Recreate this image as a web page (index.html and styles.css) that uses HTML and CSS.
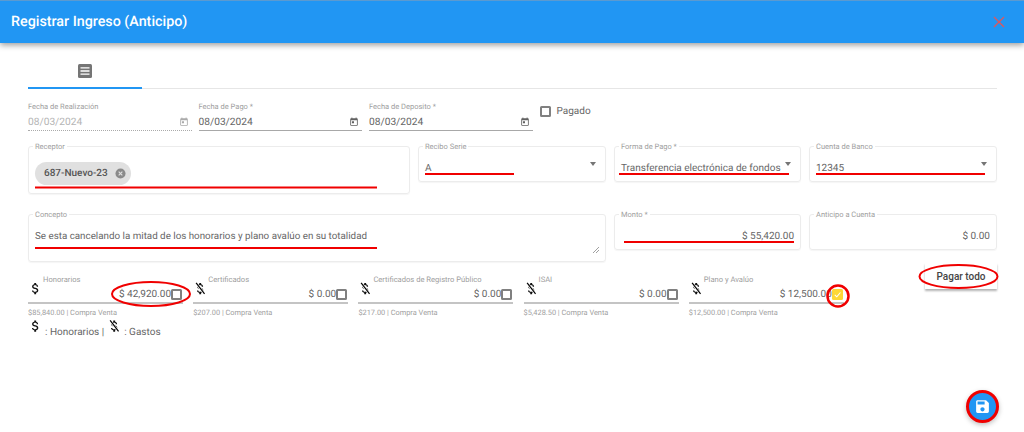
FILE: index.html
```html
<!DOCTYPE html>
<html lang="es">
<head>
    <meta charset="UTF-8">
    <title>Registrar Ingreso (Anticipo)</title>
    <link rel="stylesheet" href="styles.css">
</head>
<body>
    <svg class="defs" width="0" height="0">
        <symbol id="usd" viewBox="0 0 24 24">
            <path d="M11.8,10.9C9.53,10.31 8.8,9.7 8.8,8.75C8.8,7.66 9.81,6.9 11.5,6.9C13.28,6.9 13.94,7.75 14,9H16.21C16.14,7.28 15.09,5.7 13,5.19V3H10V5.16C8.06,5.58 6.5,6.84 6.5,8.77C6.5,11.08 8.41,12.23 11.2,12.9C13.7,13.5 14.2,14.38 14.2,15.31C14.2,16 13.71,17.1 11.5,17.1C9.44,17.1 8.63,16.18 8.5,15H6.32C6.44,17.19 8.08,18.42 10,18.83V21H13V18.85C14.95,18.5 16.5,17.35 16.5,15.3C16.5,12.46 14.07,11.5 11.8,10.9Z"/>
        </symbol>
        <symbol id="usd-off" viewBox="0 0 24 24">
            <path d="M11.8,10.9C9.53,10.31 8.8,9.7 8.8,8.75C8.8,7.66 9.81,6.9 11.5,6.9C13.28,6.9 13.94,7.75 14,9H16.21C16.14,7.28 15.09,5.7 13,5.19V3H10V5.16C8.06,5.58 6.5,6.84 6.5,8.77C6.5,11.08 8.41,12.23 11.2,12.9C13.7,13.5 14.2,14.38 14.2,15.31C14.2,16 13.71,17.1 11.5,17.1C9.44,17.1 8.63,16.18 8.5,15H6.32C6.44,17.19 8.08,18.42 10,18.83V21H13V18.85C14.95,18.5 16.5,17.35 16.5,15.3C16.5,12.46 14.07,11.5 11.8,10.9Z"/>
            <path d="M5.5 4.5L18 20" stroke="#fff" stroke-width="4"/>
            <path d="M5 3L18.5 20.5" stroke="#000" stroke-width="1.9"/>
        </symbol>
        <symbol id="today" viewBox="0 0 24 24">
            <path d="M19 3h-1V1h-2v2H8V1H6v2H5c-1.11 0-1.99.9-1.99 2L3 19c0 1.1.89 2 2 2h14c1.1 0 2-.9 2-2V5c0-1.1-.9-2-2-2zm0 16H5V8h14v11zM7 10h5v5H7z"/>
        </symbol>
    </svg>

    <header class="topbar">
        <h1>Registrar Ingreso (Anticipo)</h1>
        <svg class="close-icon" viewBox="0 0 12 12"><path d="M1 1L11 11M11 1L1 11"/></svg>
    </header>

    <main class="content">
        <div class="tabs">
            <div class="tab active">
                <svg class="tab-icon" viewBox="0 0 14 14">
                    <rect width="14" height="14" rx="1.5" fill="#757575"/>
                    <path d="M2.5 3.8H11.5M2.5 7H11.5M2.5 10.2H11.5" stroke="#fff" stroke-width="1.3"/>
                </svg>
            </div>
        </div>

        <div class="dates-row">
            <div class="date-field disabled">
                <label>Fecha de Realización</label>
                <div class="date-input"><span>08/03/2024</span><svg class="cal"><use href="#today"/></svg></div>
            </div>
            <div class="date-field">
                <label>Fecha de Pago *</label>
                <div class="date-input"><span>08/03/2024</span><svg class="cal"><use href="#today"/></svg></div>
            </div>
            <div class="date-field">
                <label>Fecha de Deposito *</label>
                <div class="date-input"><span>08/03/2024</span><svg class="cal"><use href="#today"/></svg></div>
            </div>
            <div class="paid-check"><span class="box"></span><span>Pagado</span></div>
        </div>

        <div class="form-grid row-select">
            <div class="outlined tall">
                <span class="legend">Receptor</span>
                <span class="chip">687-Nuevo-23
                    <svg class="chip-x" viewBox="0 0 12 12"><circle cx="6" cy="6" r="5.5" fill="#8a8a8a"/><path d="M4 4L8 8M8 4L4 8" stroke="#e0e0e0" stroke-width="1.2"/></svg>
                </span>
            </div>
            <div class="outlined select"><span class="legend">Recibo Serie</span><span class="value">A</span><i class="caret"></i></div>
            <div class="outlined select"><span class="legend">Forma de Pago *</span><span class="value">Transferencia electrónica de fondos</span><i class="caret"></i></div>
            <div class="outlined select"><span class="legend">Cuenta de Banco</span><span class="value">12345</span><i class="caret"></i></div>
        </div>

        <div class="form-grid row-concept">
            <div class="outlined tall span-2">
                <span class="legend">Concepto</span>
                <span class="value concept-text">Se esta cancelando la mitad de los honorarios y plano avalúo en su totalidad</span>
                <svg class="resize" viewBox="0 0 6 6"><path d="M0 6L6 0M3 6L6 3" stroke="#888" stroke-width=".8"/></svg>
            </div>
            <div class="outlined amount"><span class="legend">Monto *</span><span class="value">$ 55,420.00</span></div>
            <div class="outlined amount"><span class="legend">Anticipo a Cuenta</span><span class="value">$ 0.00</span></div>
        </div>

        <div class="concepts-row">
            <div class="pay-field">
                <div class="pay-input">
                    <svg class="money"><use href="#usd"/></svg>
                    <label>Honorarios</label>
                    <span class="pay-value">$ 42,920.00</span><span class="box"></span>
                </div>
                <small>$85,840.00 | Compra Venta</small>
            </div>
            <div class="pay-field">
                <div class="pay-input">
                    <svg class="money"><use href="#usd-off"/></svg>
                    <label>Certificados</label>
                    <span class="pay-value">$ 0.00</span><span class="box"></span>
                </div>
                <small>$207.00 | Compra Venta</small>
            </div>
            <div class="pay-field">
                <div class="pay-input">
                    <svg class="money"><use href="#usd-off"/></svg>
                    <label>Certificados de Registro Público</label>
                    <span class="pay-value">$ 0.00</span><span class="box"></span>
                </div>
                <small>$217.00 | Compra Venta</small>
            </div>
            <div class="pay-field">
                <div class="pay-input">
                    <svg class="money"><use href="#usd-off"/></svg>
                    <label>ISAI</label>
                    <span class="pay-value">$ 0.00</span><span class="box"></span>
                </div>
                <small>$5,428.50 | Compra Venta</small>
            </div>
            <div class="pay-field">
                <div class="pay-input">
                    <svg class="money"><use href="#usd-off"/></svg>
                    <label>Plano y Avalúo</label>
                    <span class="pay-value">$ 12,500.00</span>
                    <span class="box checked"><svg viewBox="0 0 12 12"><path d="M3 6.5L5.2 8.5L9.2 3.8" fill="none" stroke="#fff" stroke-width="1.1"/></svg></span>
                </div>
                <small>$12,500.00 | Compra Venta</small>
            </div>
            <button class="pay-all">Pagar todo</button>
        </div>

        <div class="legend-row">
            <svg class="money"><use href="#usd"/></svg><span>: Honorarios |</span>
            <svg class="money off"><use href="#usd-off"/></svg><span>: Gastos</span>
        </div>
    </main>

    <button class="fab">
        <svg viewBox="0 0 24 24"><path d="M17 3H5c-1.11 0-2 .9-2 2v14c0 1.1.89 2 2 2h14c1.1 0 2-.9 2-2V7l-4-4zm-5 16c-1.66 0-3-1.34-3-3s1.34-3 3-3 3 1.34 3 3-1.34 3-3 3zm3-10H5V5h10v4z"/></svg>
    </button>

    <!-- marcas rojas hechas sobre la captura -->
    <svg class="marks" viewBox="0 0 1024 432">
        <path d="M35 187.5H377M425 174H514M619 174H789M816 174H985M35 248H377M624 242H794"/>
        <ellipse cx="151" cy="294" rx="39" ry="12"/>
        <ellipse cx="958.5" cy="276.5" rx="39" ry="11.5"/>
        <circle cx="838" cy="296" r="10.5"/>
    </svg>
</body>
</html>
```

FILE: styles.css
```css
* {
    box-sizing: border-box;
}
html, body {
    height: 432px;
}
body {
    margin: 0;
    overflow: hidden;
    position: relative;
    background: #fff;
    color: #666;
    font-family: Roboto, "Liberation Sans", sans-serif;
    font-size: 10px;
    text-rendering: geometricPrecision;
}
.defs {
    position: absolute;
}
.topbar {
    height: 43px;
    padding: 0 19px 0 11px;
    display: flex;
    align-items: center;
    justify-content: space-between;
    background: #2196f3;
    border-top: 1px solid #5b9ad0;
    box-shadow: 0 2px 6px rgba(0, 0, 0, 0.4);
}
.topbar h1 {
    margin: 0;
    font-size: 14.3px;
    font-weight: 500;
    color: #fff;
}
.close-icon {
    width: 12px;
    height: 12px;
    fill: none;
    stroke: #e0565b;
    stroke-width: 1.3;
}
.content {
    padding: 0 27px 0 28px;
}
.tabs {
    height: 46px;
    border-bottom: 1px solid #e6e6e6;
}
.tab {
    width: 114px;
    height: 46px;
    padding-top: 21px;
    display: flex;
    justify-content: center;
    border-bottom: 2px solid #2196f3;
}
.tab-icon {
    width: 14px;
    height: 14px;
}
.dates-row {
    margin-top: 11px;
    display: flex;
    gap: 7px;
}
.date-field {
    width: 163.5px;
}
.date-field label {
    display: block;
    height: 13px;
    font-size: 7.5px;
    line-height: 13px;
    color: #9e9e9e;
}
.date-input {
    height: 18px;
    display: flex;
    align-items: center;
    justify-content: space-between;
    border-bottom: 1px solid #a8a8a8;
    padding: 1px 3px 0 0;
    font-size: 10.2px;
}
.disabled .date-input {
    color: #b5b5b5;
    border-bottom: 1px dotted #aaa;
}
.cal {
    width: 10px;
    height: 10px;
    fill: #616161;
}
.disabled .cal {
    fill: #aaa;
}
.box {
    display: inline-block;
    width: 11px;
    height: 11px;
    flex: none;
    border: 2px solid #808080;
    border-radius: 1.5px;
}
.box.checked {
    border: none;
    background: #fdd835;
}
.box.checked svg {
    display: block;
}
.paid-check {
    padding-top: 6px;
    display: flex;
    align-items: flex-start;
    gap: 6px;
    line-height: 11px;
}
.form-grid {
    display: grid;
    grid-template-columns: 382px 188px 187px 188px;
    gap: 8px;
    align-items: start;
}
.row-select {
    margin-top: 15px;
}
.row-concept {
    margin-top: 20px;
}
.span-2 {
    grid-column: span 2;
}
.outlined {
    position: relative;
    height: 36px;
    padding: 15px 6px 0;
    border: 1px solid #ececec;
    border-radius: 3px;
    line-height: 14px;
    box-shadow: 0 1px 1px rgba(0, 0, 0, 0.04);
}
.outlined.tall {
    height: 48px;
}
.legend {
    position: absolute;
    top: -5px;
    left: 4px;
    padding: 0 2px;
    background: #fff;
    font-size: 7.5px;
    line-height: 10px;
    color: #9e9e9e;
}
.value {
    display: block;
    white-space: nowrap;
}
.concept-text {
    font-size: 9.8px;
}
.select .caret {
    position: absolute;
    top: 15px;
    right: 9px;
    border: 3px solid transparent;
    border-top: 4px solid #757575;
    border-bottom: none;
}
.amount {
    text-align: right;
}
.resize {
    position: absolute;
    right: 6px;
    bottom: 8px;
    width: 6px;
    height: 6px;
}
.chip {
    height: 23px;
    width: 96px;
    padding-left: 9px;
    display: inline-flex;
    align-items: center;
    gap: 7px;
    background: #e0e0e0;
    border-radius: 12px;
    font-weight: 500;
    white-space: nowrap;
    color: #555;
}
.chip-x {
    width: 11px;
    height: 11px;
    flex: none;
}
.concepts-row {
    margin-top: 11px;
    display: flex;
    gap: 10.2px;
    align-items: flex-start;
    position: relative;
}
.pay-field {
    width: 155px;
}
.pay-input {
    height: 31px;
    display: flex;
    align-items: flex-end;
    justify-content: flex-end;
    position: relative;
    border-bottom: 2px solid #c4c4c4;
    padding: 0 1px 2px 0;
    line-height: 15px;
}
.pay-value {
    margin-bottom: -2px;
}
.pay-input label {
    position: absolute;
    top: 1px;
    left: 15px;
    font-size: 7.6px;
    line-height: 12px;
    color: #9e9e9e;
    white-space: nowrap;
}
.money {
    position: absolute;
    top: 8px;
    left: 0;
    width: 15px;
    height: 15px;
    fill: #111;
}
small {
    display: block;
    margin-top: 3px;
    font-size: 7.4px;
    line-height: 11px;
    color: #a0a0a0;
}
.pay-all {
    margin-left: auto;
    margin-top: -10px;
    width: 72px;
    height: 26px;
    padding: 0;
    border: none;
    background: #fff;
    box-shadow: 0 2px 2px rgba(0, 0, 0, 0.3);
    font-family: inherit;
    font-size: 10px;
    font-weight: 500;
    color: #444;
}
.legend-row {
    margin-top: 2px;
    display: flex;
    align-items: flex-end;
    height: 19px;
}
.legend-row .money {
    position: static;
    width: 15px;
    height: 16px;
    flex: none;
    margin-bottom: 5px;
}
.legend-row .money.off {
    margin-left: 3px;
}
.legend-row span {
    margin-left: 2px;
    line-height: 13px;
}
.fab {
    position: absolute;
    left: 966px;
    top: 390px;
    width: 33px;
    height: 33px;
    padding: 5px;
    border: 3px solid #f00000;
    border-radius: 50%;
    background: #2196f3;
    box-shadow: 0 2px 5px rgba(0, 0, 0, 0.25);
}
.fab svg {
    display: block;
    width: 17px;
    height: 17px;
    fill: #fff;
}
.marks {
    position: absolute;
    left: 0;
    top: 0;
    width: 1024px;
    height: 432px;
    pointer-events: none;
    fill: none;
    stroke: #f00000;
    stroke-width: 2;
}
.marks circle {
    stroke-width: 2.5;
}
```
